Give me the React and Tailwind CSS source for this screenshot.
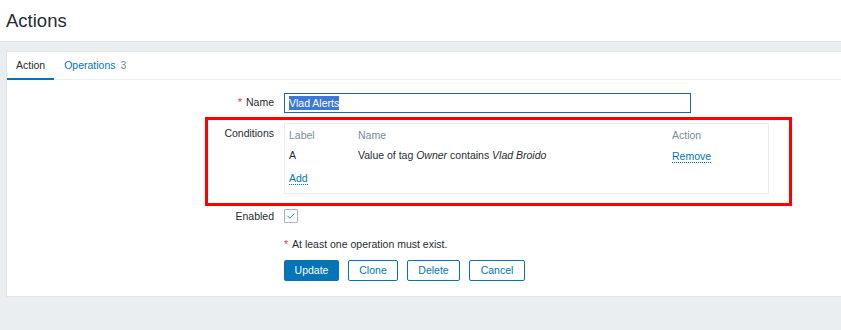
export default function App() {
  return (
    <div className="w-[841px] h-[330px] overflow-hidden bg-[#ebeef0] font-['Liberation_Sans',Arial,sans-serif] text-[10.5px] text-[#1f2c33] relative">
      <header className="h-[42px] bg-white border-b border-[#dfe4e7] pl-[6px] flex items-center">
        <h1 className="text-[18.5px] leading-none text-[#1f2c33] mt-[1px]">Actions</h1>
      </header>
      <div className="pt-[9px] pl-[6px]">
        <div className="w-[850px] bg-white border border-[#dfe4e7]">
          <div className="h-[28px] border-b border-[#ebeef0] flex items-stretch">
            <div className="px-[9px] flex items-center border-b-[2px] border-[#0275b8] pt-[2px] -mb-[1px]">Action</div>
            <div className="pl-[10px] pr-[9px] flex items-center text-[#0275b8] pt-[1px]">
              Operations<span className="ml-[5px] text-[#768d99]">3</span>
            </div>
          </div>
          <div className="pt-[13px] pb-[15px]">
            <div className="grid grid-cols-[267px_1fr] gap-x-[10px]">
              <div className="h-[20px] flex items-center justify-end"><span className="text-[#e33734] mr-[4px]">*</span>Name</div>
              <div>
                <div className="w-[407px] h-[20px] border border-[#1f65a6] flex items-center px-[4px]">
                  <span className="bg-[#3b78d8] text-white leading-[14px]">Vlad Alerts</span>
                </div>
              </div>

              <div className="mt-[10px] pt-[3px] text-right">Conditions</div>
              <div className="mt-[10px]">
                <div className="w-[485px] h-[71px] border border-[#ebeef0] px-[4px]">
                  <div className="flex h-[23px] items-center text-[#768d99] pt-[1px]">
                    <div className="w-[69px]">Label</div>
                    <div className="w-[314px]">Name</div>
                    <div>Action</div>
                  </div>
                  <div className="flex h-[18px] items-center">
                    <div className="w-[69px]">A</div>
                    <div className="w-[314px]">Value of tag <i>Owner</i> contains <i>Vlad Broido</i></div>
                    <div className="text-[#0275b8] border-b border-dotted border-[#0275b8] leading-[12px]">Remove</div>
                  </div>
                  <div className="flex h-[26px] items-center">
                    <span className="text-[#0275b8] border-b border-dotted border-[#0275b8] leading-[12px]">Add</span>
                  </div>
                </div>
              </div>

              <div className="mt-[10px] h-[24px] flex items-center justify-end pt-[2px]">Enabled</div>
              <div className="mt-[10px] h-[24px] flex items-center">
                <div className="w-[14px] h-[14px] border border-[#a8b6be] rounded-[1px] flex items-center justify-center">
                  <svg width="10" height="8" viewBox="0 0 10 8"><path d="M1.5 3.8 L3.9 6.2 L8.5 1.5" fill="none" stroke="#2a86c4" strokeWidth="1" /></svg>
                </div>
              </div>

              <div className="mt-[8px] h-[18px]"></div>
              <div className="mt-[8px] h-[18px] flex items-center"><span className="text-[#e33734] mr-[4px]">*</span>At least one operation must exist.</div>

              <div className="mt-[6px]"></div>
              <div className="mt-[6px] flex gap-[9px]">
                <button className="h-[21px] w-[55px] bg-[#0275b8] text-white rounded-[2px]">Update</button>
                <button className="h-[21px] w-[50px] border border-[#0275b8] text-[#0275b8] rounded-[2px]">Clone</button>
                <button className="h-[21px] w-[53px] border border-[#0275b8] text-[#0275b8] rounded-[2px]">Delete</button>
                <button className="h-[21px] w-[56px] border border-[#0275b8] text-[#0275b8] rounded-[2px]">Cancel</button>
              </div>
            </div>
          </div>
        </div>
      </div>
      <div className="absolute left-[205px] top-[117px] w-[587px] h-[89px] border-[3px] border-[#ff0000] pointer-events-none"></div>
    </div>
  );
}
